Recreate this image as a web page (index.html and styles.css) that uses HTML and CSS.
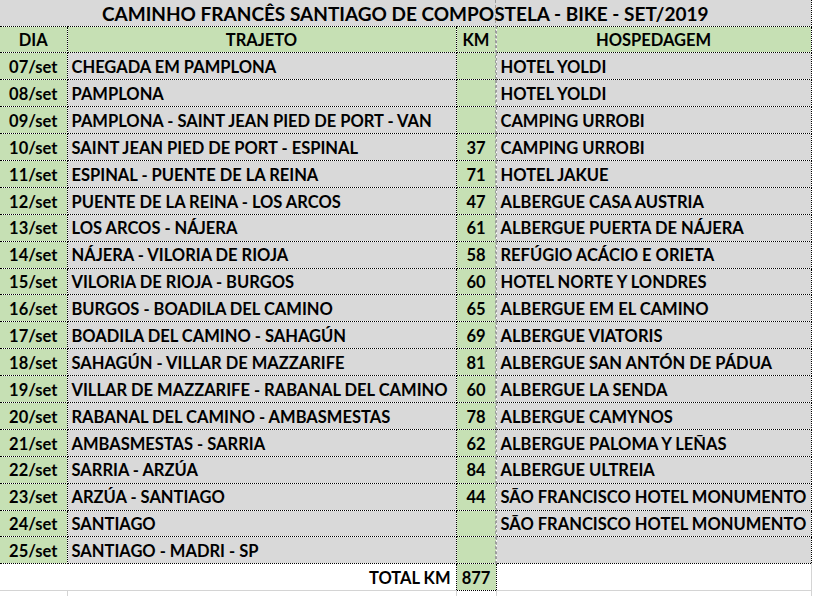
FILE: index.html
```html
<!DOCTYPE html>
<html lang="pt">
<head>
<meta charset="utf-8">
<title>Caminho Francês</title>
<link rel="stylesheet" href="styles.css">
</head>
<body>
<div class="sheet">
<table class="plan">
<colgroup><col class="c-dia"><col class="c-traj"><col class="c-km"><col class="c-hosp"></colgroup>
<tbody>
<tr class="title"><td colspan="4">CAMINHO FRANCÊS SANTIAGO DE COMPOSTELA - BIKE - SET/2019</td></tr>
<tr class="head"><td>DIA</td><td>TRAJETO</td><td class="km">KM</td><td>HOSPEDAGEM</td></tr>
<tr><td class="dia">07/set</td><td class="txt">CHEGADA EM PAMPLONA</td><td class="km"></td><td class="txt hosp">HOTEL YOLDI</td></tr>
<tr><td class="dia">08/set</td><td class="txt">PAMPLONA</td><td class="km"></td><td class="txt hosp">HOTEL YOLDI</td></tr>
<tr><td class="dia">09/set</td><td class="txt">PAMPLONA - SAINT JEAN PIED DE PORT - VAN</td><td class="km"></td><td class="txt hosp">CAMPING URROBI</td></tr>
<tr><td class="dia">10/set</td><td class="txt">SAINT JEAN PIED DE PORT - ESPINAL</td><td class="km">37</td><td class="txt hosp">CAMPING URROBI</td></tr>
<tr><td class="dia">11/set</td><td class="txt">ESPINAL - PUENTE DE LA REINA</td><td class="km">71</td><td class="txt hosp">HOTEL JAKUE</td></tr>
<tr><td class="dia">12/set</td><td class="txt">PUENTE DE LA REINA - LOS ARCOS</td><td class="km">47</td><td class="txt hosp">ALBERGUE CASA AUSTRIA</td></tr>
<tr><td class="dia">13/set</td><td class="txt">LOS ARCOS - NÁJERA</td><td class="km">61</td><td class="txt hosp">ALBERGUE PUERTA DE NÁJERA</td></tr>
<tr><td class="dia">14/set</td><td class="txt">NÁJERA - VILORIA DE RIOJA</td><td class="km">58</td><td class="txt hosp">REFÚGIO ACÁCIO E ORIETA</td></tr>
<tr><td class="dia">15/set</td><td class="txt">VILORIA DE RIOJA - BURGOS</td><td class="km">60</td><td class="txt hosp">HOTEL NORTE Y LONDRES</td></tr>
<tr><td class="dia">16/set</td><td class="txt">BURGOS - BOADILA DEL CAMINO</td><td class="km">65</td><td class="txt hosp">ALBERGUE EM EL CAMINO</td></tr>
<tr><td class="dia">17/set</td><td class="txt">BOADILA DEL CAMINO - SAHAGÚN</td><td class="km">69</td><td class="txt hosp">ALBERGUE VIATORIS</td></tr>
<tr><td class="dia">18/set</td><td class="txt">SAHAGÚN - VILLAR DE MAZZARIFE</td><td class="km">81</td><td class="txt hosp">ALBERGUE SAN ANTÓN DE PÁDUA</td></tr>
<tr><td class="dia">19/set</td><td class="txt">VILLAR DE MAZZARIFE - RABANAL DEL CAMINO</td><td class="km">60</td><td class="txt hosp">ALBERGUE LA SENDA</td></tr>
<tr><td class="dia">20/set</td><td class="txt">RABANAL DEL CAMINO - AMBASMESTAS</td><td class="km">78</td><td class="txt hosp">ALBERGUE CAMYNOS</td></tr>
<tr><td class="dia">21/set</td><td class="txt">AMBASMESTAS - SARRIA</td><td class="km">62</td><td class="txt hosp">ALBERGUE PALOMA Y LEÑAS</td></tr>
<tr><td class="dia">22/set</td><td class="txt">SARRIA - ARZÚA</td><td class="km">84</td><td class="txt hosp">ALBERGUE ULTREIA</td></tr>
<tr><td class="dia">23/set</td><td class="txt">ARZÚA - SANTIAGO</td><td class="km">44</td><td class="txt hosp">SÃO FRANCISCO HOTEL MONUMENTO</td></tr>
<tr><td class="dia">24/set</td><td class="txt">SANTIAGO</td><td class="km"></td><td class="txt hosp">SÃO FRANCISCO HOTEL MONUMENTO</td></tr>
<tr><td class="dia">25/set</td><td class="txt">SANTIAGO - MADRI - SP</td><td class="km"></td><td class="txt hosp"></td></tr>
<tr class="total"><td colspan="2" class="lbl">TOTAL KM</td><td class="km">877</td><td class="blank"></td></tr>
<tr class="grid"><td></td><td></td><td></td><td></td></tr>
</tbody>
</table>
</div>
</body>
</html>
```
FILE: styles.css
```css
html, body {
  margin: 0;
  padding: 0;
  background: #ffffff;
  overflow: hidden;
}
.sheet {
  position: relative;
  width: 813px;
  height: 596px;
  overflow: hidden;
}
.sheet::after {
  content: "";
  position: absolute;
  left: 495px;
  top: 0;
  height: 564px;
  border-left: 1px dashed #9c9c9c;
}
.plan {
  border-collapse: collapse;
  table-layout: fixed;
  width: 811px;
  font-family: Lato, "Liberation Sans", sans-serif;
  font-weight: 700;
  font-size: 16.5px;
  color: #000;
}
.c-dia { width: 67px; }
.c-traj { width: 389px; }
.c-km { width: 40px; }
.c-hosp { width: 315px; }
.plan td {
  height: 26.9px;
  padding: 0 4px;
  box-sizing: border-box;
  background: #d9d9d9;
  border: 1px dotted #000;
  white-space: nowrap;
  overflow: hidden;
  vertical-align: middle;
  line-height: 1;
  padding-top: 2px;
}
.plan tr > td:first-child { border-left: none; }
.title td {
  border-top: none;
  height: 26px;
  text-align: center;
  font-size: 19px;
  padding-top: 1px;
}
.head td {
  background: #c6e0b4;
  text-align: center;
}
.plan td.dia {
  background: #c6e0b4;
  text-align: center;
  padding: 2px 0 0;
}
.plan td.km {
  background: #c6e0b4;
  text-align: center;
  padding: 2px 0 0;
}
.plan td.hosp, .head td:last-child {
  border-left: 1px dashed #9c9c9c;
}
.plan td.txt { text-align: left; }
.total td {
  background: #fff;
  border-left: none;
  border-right: none;
  border-bottom: 1px solid #d4d4d4;
}
.plan .total td.km {
  background: #c6e0b4;
  border: 1px dotted #000;
}
.total td.lbl {
  text-align: right;
  padding-right: 5px;
}
.total td.blank {
  border-right: 1px solid #d4d4d4;
}
.grid td {
  background: #fff;
  border: 1px solid #d4d4d4;
  border-top: none;
}
```
